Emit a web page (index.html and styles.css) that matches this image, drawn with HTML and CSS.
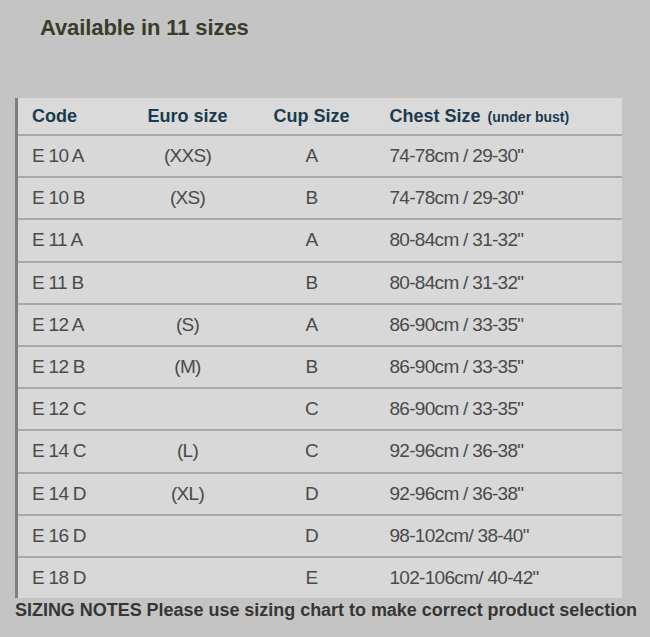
FILE: index.html
```html
<!DOCTYPE html>
<html lang="en">
<head>
<meta charset="utf-8">
<title>Available in 11 sizes</title>
<link rel="stylesheet" href="styles.css">
</head>
<body>
<div class="page">
  <h1 class="title">Available in 11 sizes</h1>
  <table class="chart">
    <colgroup>
      <col class="w-code"><col class="w-euro"><col class="w-cup"><col class="w-chest">
    </colgroup>
    <thead>
      <tr class="head">
        <th class="c-code">Code</th>
        <th class="c-euro">Euro size</th>
        <th class="c-cup">Cup Size</th>
        <th class="c-chest">Chest Size <span class="sub">(under bust)</span></th>
      </tr>
    </thead>
    <tbody>
      <tr><td class="c-code">E 10 A</td><td class="c-euro">(XXS)</td><td class="c-cup">A</td><td class="c-chest">74-78cm / 29-30"</td></tr>
      <tr><td class="c-code">E 10 B</td><td class="c-euro">(XS)</td><td class="c-cup">B</td><td class="c-chest">74-78cm / 29-30"</td></tr>
      <tr><td class="c-code">E 11 A</td><td class="c-euro"></td><td class="c-cup">A</td><td class="c-chest">80-84cm / 31-32"</td></tr>
      <tr><td class="c-code">E 11 B</td><td class="c-euro"></td><td class="c-cup">B</td><td class="c-chest">80-84cm / 31-32"</td></tr>
      <tr><td class="c-code">E 12 A</td><td class="c-euro">(S)</td><td class="c-cup">A</td><td class="c-chest">86-90cm / 33-35"</td></tr>
      <tr><td class="c-code">E 12 B</td><td class="c-euro">(M)</td><td class="c-cup">B</td><td class="c-chest">86-90cm / 33-35"</td></tr>
      <tr><td class="c-code">E 12 C</td><td class="c-euro"></td><td class="c-cup">C</td><td class="c-chest">86-90cm / 33-35"</td></tr>
      <tr><td class="c-code">E 14 C</td><td class="c-euro">(L)</td><td class="c-cup">C</td><td class="c-chest">92-96cm / 36-38"</td></tr>
      <tr><td class="c-code">E 14 D</td><td class="c-euro">(XL)</td><td class="c-cup">D</td><td class="c-chest">92-96cm / 36-38"</td></tr>
      <tr><td class="c-code">E 16 D</td><td class="c-euro"></td><td class="c-cup">D</td><td class="c-chest">98-102cm/ 38-40"</td></tr>
      <tr><td class="c-code">E 18 D</td><td class="c-euro"></td><td class="c-cup">E</td><td class="c-chest">102-106cm/ 40-42"</td></tr>
    </tbody>
  </table>
  <p class="notes">SIZING NOTES Please use sizing chart to make correct product selection</p>
</div>
</body>
</html>
```

FILE: styles.css
```css
html, body {
  margin: 0;
  padding: 0;
}
body {
  background: #c4c4c4;
  font-family: "Liberation Sans", Arial, sans-serif;
  width: 650px;
  height: 637px;
  overflow: hidden;
}
.page {
  padding: 15px 0 0 15px;
}
.title {
  margin: 0 0 0 25px;
  font-size: 22px;
  line-height: 26px;
  font-weight: bold;
  color: #3a3c2b;
  letter-spacing: -0.1px;
}
.chart {
  margin-top: 57px;
  width: 607px;
  table-layout: fixed;
  border-collapse: collapse;
  border-left: 3px solid #7e7e7e;
  background: #d8d8d8;
}
.w-code { width: 107px; }
.w-euro { width: 128px; }
.w-cup { width: 120px; }
.w-chest { width: auto; }
.chart th, .chart td {
  padding: 0;
  vertical-align: middle;
  white-space: nowrap;
}
.head th {
  height: 36px;
  font-size: 18px;
  font-weight: bold;
  color: #1b3a4e;
  background: #dadada;
}
.sub {
  font-size: 14px;
  letter-spacing: 0;
  margin-left: 2px;
}
.chart tbody tr {
  border-top: 2px solid #a9a9a9;
}
.chart td {
  height: 40.2px;
  font-size: 19px;
  letter-spacing: -0.7px;
  color: #4a4a4a;
}
.chart .c-code {
  padding-left: 14px;
  text-align: left;
}
.c-euro {
  text-align: center;
}
.c-cup {
  text-align: center;
}
.chart .c-chest {
  text-align: left;
  padding-left: 18px;
}
.notes {
  margin: 1px 0 0;
  font-size: 18px;
  line-height: 22px;
  font-weight: bold;
  color: #363636;
  letter-spacing: -0.03px;
}
```
